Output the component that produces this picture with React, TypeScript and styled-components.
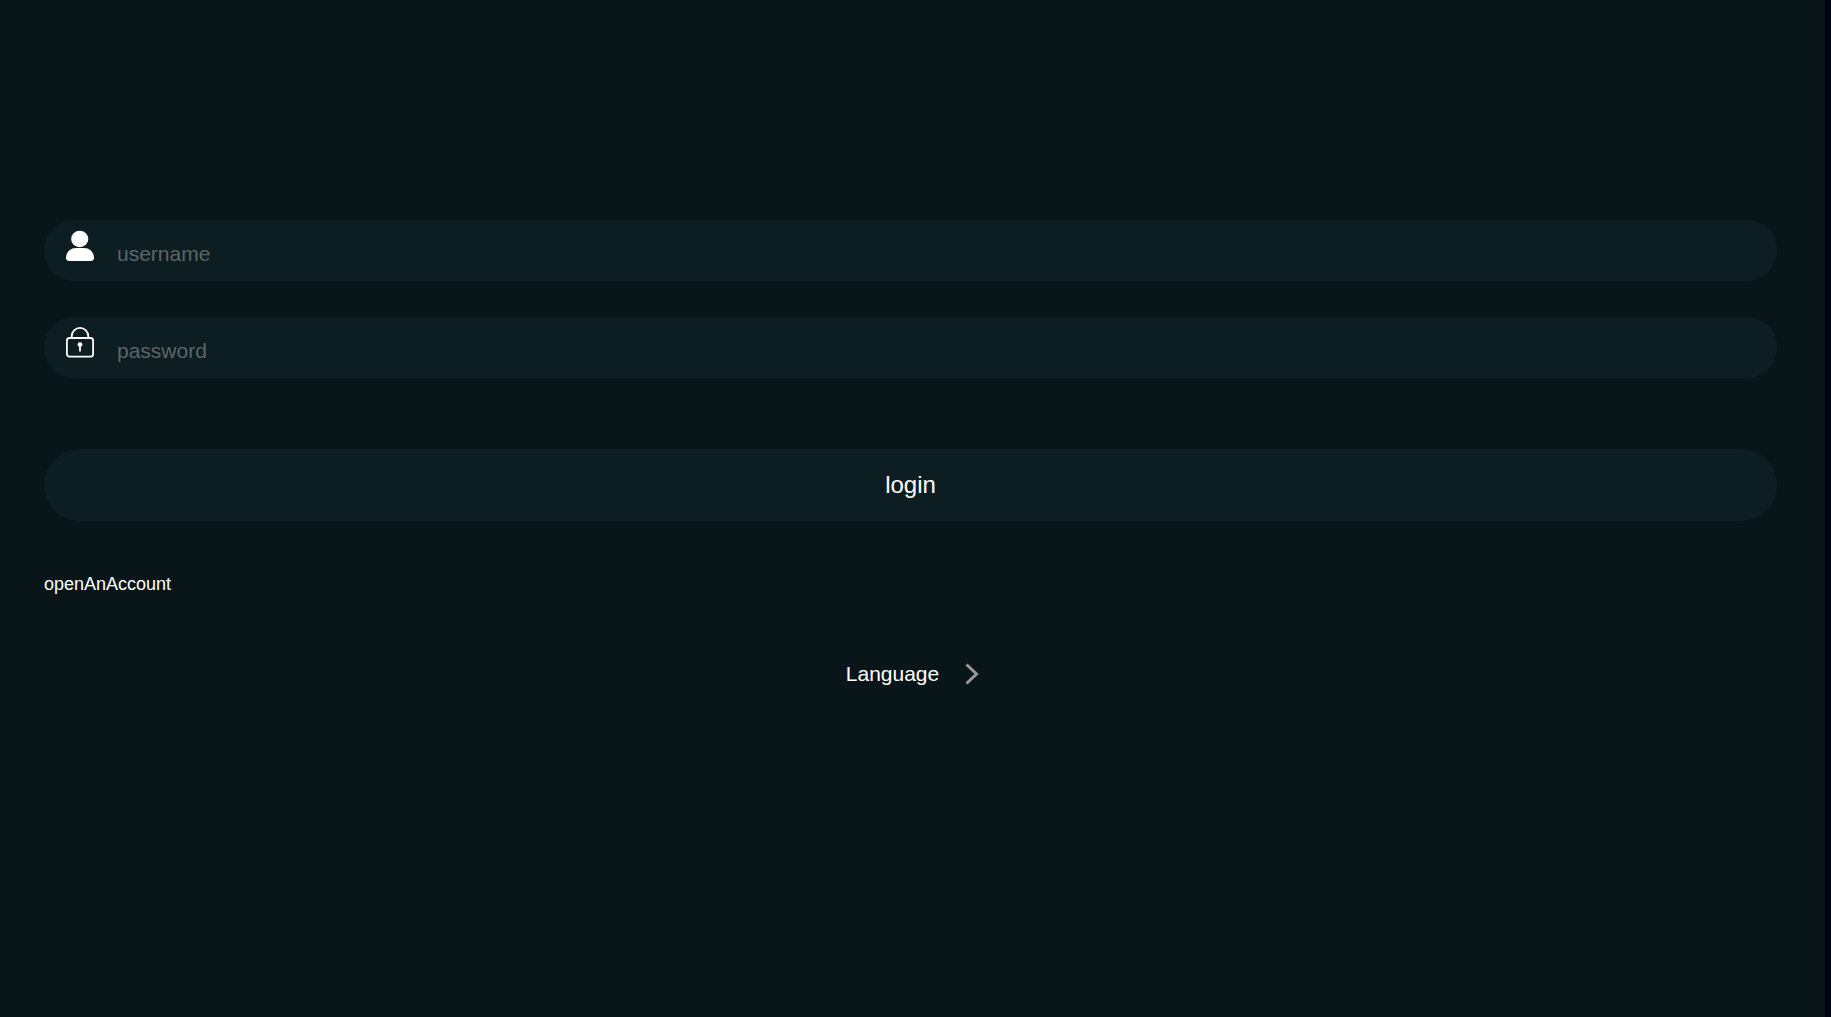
import React from "react";
import styled, { createGlobalStyle } from "styled-components";

const GlobalStyle = createGlobalStyle`
  * {
    box-sizing: border-box;
  }
  body {
    margin: 0;
    background: #000314;
    font-family: "Liberation Sans", Arial, sans-serif;
  }
`;

const Page = styled.main`
  display: flex;
  flex-direction: column;
  min-height: 100vh;
  margin-right: 6px;
  background: #08161a;
  color: #ffffff;
`;

const LoginForm = styled.form`
  display: flex;
  flex-direction: column;
  padding: 220px 48px 0 44px;
`;

const Fields = styled.div`
  display: flex;
  flex-direction: column;
  gap: 36px;
`;

const Field = styled.label`
  display: flex;
  align-items: flex-start;
  height: 61px;
  padding: 10px 22px 0;
  border-radius: 30px;
  background: #0c1e22;
`;

const FieldIcon = styled.svg`
  flex: none;
  width: 28px;
  height: 32px;
`;

const TextInput = styled.input`
  flex: 1;
  min-width: 0;
  height: 48px;
  margin-left: 23px;
  padding: 0;
  border: 0;
  outline: 0;
  background: transparent;
  color: #ffffff;
  font: 21px "Liberation Sans", Arial, sans-serif;

  &::placeholder {
    color: #606364;
    opacity: 1;
  }
`;

const LoginButton = styled.button`
  height: 72px;
  margin-top: 71px;
  padding: 0;
  border: 0;
  border-radius: 36px;
  background: #0c1e22;
  color: #ffffff;
  font: 24px "Liberation Sans", Arial, sans-serif;
  cursor: pointer;
`;

const AccountLink = styled.a`
  align-self: flex-start;
  margin-top: 52px;
  color: #ffffff;
  font-size: 18px;
  line-height: 22px;
  text-decoration: none;
`;

const LanguageButton = styled.button`
  display: flex;
  align-items: center;
  align-self: center;
  gap: 26px;
  margin-top: 67px;
  padding: 0;
  border: 0;
  background: transparent;
  color: #ffffff;
  font: 21px/24px "Liberation Sans", Arial, sans-serif;
  cursor: pointer;
`;

const Chevron = styled.svg`
  width: 14px;
  height: 22px;
`;

function UserIcon() {
  return (
    <FieldIcon viewBox="0 0 28 32" fill="#ffffff" aria-hidden="true">
      <ellipse cx="13.700" cy="9" rx="8.600" ry="8.200" />
      <path d="M10 18h8c6 0 10 4.500 10 10.200 0 2-2 2.800-4.500 2.800h-19C2 31 0 30.200 0 28.200 0 22.500 4 18 10 18z" />
    </FieldIcon>
  );
}

function LockIcon() {
  return (
    <FieldIcon viewBox="0 0 28 32" fill="none" stroke="#ffffff" strokeWidth="1.800" aria-hidden="true">
      <rect x="0.900" y="11" width="26.200" height="18.600" rx="2.600" />
      <path d="M5.700 11V9.200a8.300 8.300 0 0 1 16.600 0V11" />
      <circle cx="14" cy="17.600" r="2.400" fill="#ffffff" stroke="none" />
      <path d="M14 18v6.500" />
    </FieldIcon>
  );
}

export default function App() {
  return (
    <>
      <GlobalStyle />
      <Page>
        <LoginForm onSubmit={(event) => event.preventDefault()}>
          <Fields>
            <Field>
              <UserIcon />
              <TextInput type="text" name="username" placeholder="username" aria-label="username" />
            </Field>
            <Field>
              <LockIcon />
              <TextInput type="password" name="password" placeholder="password" aria-label="password" />
            </Field>
          </Fields>
          <LoginButton type="submit">login</LoginButton>
          <AccountLink href="#register">openAnAccount</AccountLink>
        </LoginForm>
        <LanguageButton type="button">
          Language
          <Chevron viewBox="0 0 14 22" fill="none" stroke="#999999" strokeWidth="3" aria-hidden="true">
            <path d="M1.500 1.500L11.500 11L1.500 20.500" />
          </Chevron>
        </LanguageButton>
      </Page>
    </>
  );
}
